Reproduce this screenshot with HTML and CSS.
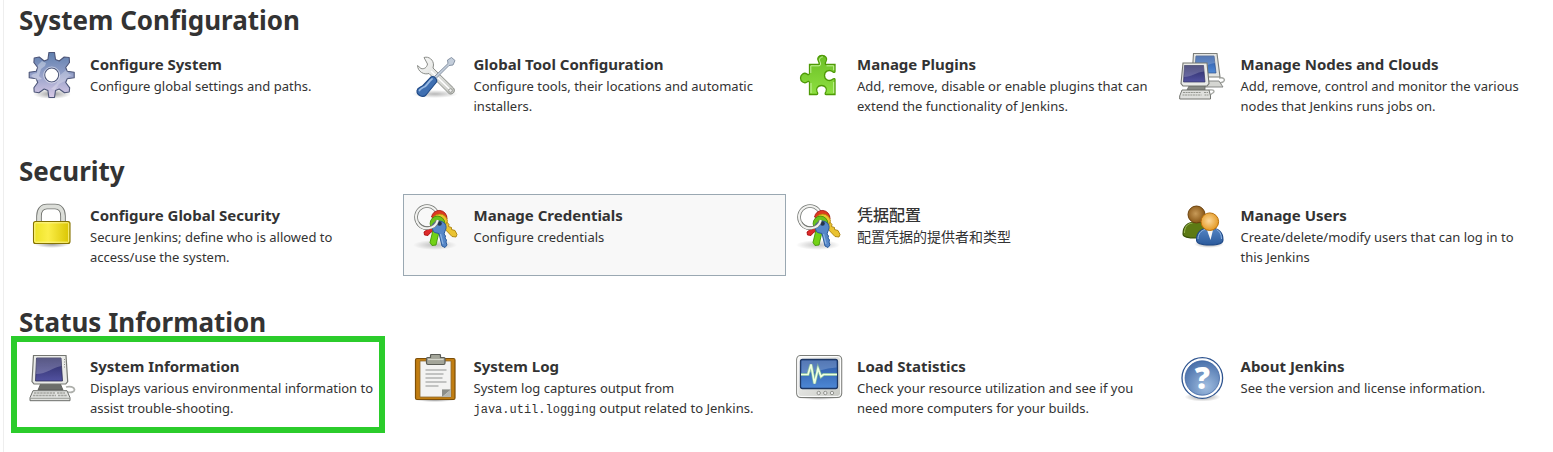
FILE: index.html
```html
<!DOCTYPE html>
<html lang="en">
<head>
    <meta charset="UTF-8">
    <meta name="viewport" content="width=device-width, initial-scale=1.0">
    <title>Manage Jenkins</title>
    <link rel="stylesheet" href="styles.css">
</head>
<body>
    <!-- shared gradients and icons used more than once -->
    <svg class="defs" width="0" height="0" aria-hidden="true">
        <defs>
            <linearGradient id="gearFill" x1="0" y1="0" x2="0" y2="1">
                <stop offset="0" stop-color="#5f7fae"/>
                <stop offset=".45" stop-color="#8f9dc6"/>
                <stop offset="1" stop-color="#d8c9e6"/>
            </linearGradient>
            <linearGradient id="metal" x1="0" y1="0" x2="1" y2="1">
                <stop offset="0" stop-color="#fafafa"/>
                <stop offset="1" stop-color="#c6c8c2"/>
            </linearGradient>
            <linearGradient id="green" x1="0" y1="0" x2="0" y2="1">
                <stop offset="0" stop-color="#6cbf26"/>
                <stop offset="1" stop-color="#8ee040"/>
            </linearGradient>
            <linearGradient id="screenDark" x1="0" y1="0" x2="0" y2="1">
                <stop offset="0" stop-color="#2a2a63"/>
                <stop offset="1" stop-color="#5252a0"/>
            </linearGradient>
            <linearGradient id="screenBlue" x1="0" y1="0" x2="0" y2="1">
                <stop offset="0" stop-color="#2a55a0"/>
                <stop offset="1" stop-color="#4d88d6"/>
            </linearGradient>
            <linearGradient id="yellow" x1="0" y1="0" x2="1" y2="0">
                <stop offset="0" stop-color="#ece224"/>
                <stop offset=".4" stop-color="#fbee48"/>
                <stop offset="1" stop-color="#d9c400"/>
            </linearGradient>
            <linearGradient id="shirtBlue" x1="0" y1="0" x2="0" y2="1">
                <stop offset="0" stop-color="#5585c4"/>
                <stop offset="1" stop-color="#2b5a9c"/>
            </linearGradient>
            <radialGradient id="brownHead" cx=".45" cy=".45" r=".6">
                <stop offset="0" stop-color="#c79a58"/>
                <stop offset="1" stop-color="#83500f"/>
            </radialGradient>
            <radialGradient id="orangeHead" cx=".45" cy=".45" r=".6">
                <stop offset="0" stop-color="#fbd89a"/>
                <stop offset="1" stop-color="#e2941a"/>
            </radialGradient>
            <radialGradient id="helpFill" cx=".6" cy=".75" r=".75">
                <stop offset="0" stop-color="#a0bde0"/>
                <stop offset="1" stop-color="#4a71ab"/>
            </radialGradient>
            <radialGradient id="shadow">
                <stop offset="0" stop-color="#000" stop-opacity=".4"/>
                <stop offset="1" stop-color="#000" stop-opacity="0"/>
            </radialGradient>
        </defs>
        <symbol id="keys" viewBox="0 0 48 48">
            <ellipse cx="23" cy="42" rx="22" ry="5" fill="url(#shadow)" opacity=".6"/>
            <circle cx="15" cy="14" r="11" fill="none" stroke="#777a76" stroke-width="3.600"/>
            <circle cx="15" cy="14" r="11" fill="none" stroke="#f2f2f0" stroke-width="2"/>
            <path d="M20 23l-8 6 .5 3 3.500 .5 2-2.500 6-4z" fill="#dd2a2a" stroke="#a40000" stroke-width=".8"/>
            <path d="M19.500 14a7.800 7.800 0 0 1 15.500 1.500l-4 6z" fill="#dd3a20" stroke="#a01010" stroke-width=".8"/>
            <path d="M29 22l5-4 3 3.500-.5 2 3 1v2l3.500 1 2 4-1 2.500-4-.5z" fill="#eac332" stroke="#a9800a" stroke-width=".9"/>
            <path d="M20 18a7.800 7.800 0 0 1 15.500 0l-3 6-6-2z" fill="#ecc22e" stroke="#ad8508" stroke-width=".8"/>
            <path d="M21 27l-3 12.500 2 3 4-.5 3-13z" fill="#73d216" stroke="#439608" stroke-width=".9"/>
            <circle cx="25.500" cy="20.500" r="7.400" fill="#6cc21c" stroke="#3f8a08" stroke-width=".8"/>
            <path d="M22.500 29.500c-4-4-3-11 4-11.500 6-.3 9.500 5 6.500 10l-1 3 1.500 2-.5 2 1.500 2-.5 2 1 3-2 2.500-3-1.500-3-12.500z" fill="#5687c8" stroke="#2b5b9b"/>
            <path d="M28.500 31l2.500 10" stroke="#8db4e2" stroke-width="1.200"/>
            <circle cx="27.500" cy="20.500" r="2.300" fill="#24344c"/>
            <path d="M25.500 17.500A11 11 0 0 1 5.500 19.500" fill="none" stroke="#777a76" stroke-width="3.600"/>
            <path d="M25.800 17A11 11 0 0 1 5.200 19" fill="none" stroke="#f2f2f0" stroke-width="2"/>
        </symbol>
    </svg>

    <main class="main-panel">
        <section class="manage-section">
            <h2 class="section-title">System Configuration</h2>
            <div class="section-list">
                <a class="section-item" href="#">
                    <svg class="icon" viewBox="0 0 48 48" aria-hidden="true">
                        <ellipse cx="24" cy="42" rx="19" ry="5" fill="url(#shadow)"/>
                        <path transform="translate(23.700 23)" fill-rule="evenodd" d="M-3.800-15.500L-2.800-22.500H2.800L3.800-15.500 7.500-14 12.500-18 17.500-17.500 17.800-12.500 14-7.500 15.500-3.800 22.500-2.800V2.800L15.500 3.800 14 7.500 18 12.800 17.500 17 12.800 17.800 7.500 14 3.800 15.500 2.800 22.500H-2.800L-3.800 15.500-7.500 14-12.800 17.800-17.500 17-17.800 12.800-14 7.500-15.500 3.800-22.500 2.800V-2.800L-15.500-3.800-14-7.500-17.800-12.500-17.500-17-12.500-18-7.500-14zM7 0A7 7 0 1 0-7 0 7 7 0 1 0 7 0z" fill="url(#gearFill)" stroke="#4c5578" stroke-width="1.100" stroke-linejoin="round"/>
                        <path d="M10 13l4-4 4 2-1 3-4 3-2 7 3 3-5 1-6-4 2-2 4-1z" fill="#fff" opacity=".35"/>
                        <path d="M31 24l7-6 3 4 3 1-4 2-3 4-6 3-4 6-4-1 6-6z" fill="#fff" opacity=".25"/>
                        <circle cx="23.700" cy="23" r="8" fill="none" stroke="#fff" stroke-opacity=".5"/>
                    </svg>
                    <div class="item-text">
                        <div class="item-title">Configure System</div>
                        <div class="item-desc">Configure global settings and paths.</div>
                    </div>
                </a>
                <a class="section-item" href="#">
                    <svg class="icon" viewBox="0 0 48 48" aria-hidden="true">
                        <ellipse cx="23" cy="42" rx="23" ry="4" fill="url(#shadow)" opacity=".7"/>
                        <path d="M12 5.500c5-1.500 9.500 2.500 9.500 7.500l-.5 3 20.500 20c2 2.500.5 6.500-4 6L17 21.500c-5 1.500-11-1.500-11.500-8l3.500 3c3 1 6-1 6.500-4.500z" fill="url(#metal)" stroke="#8b8d89" stroke-linejoin="round"/>
                        <path d="M19 19l19 18.500" stroke="#fff" stroke-width="1.500"/>
                        <circle cx="38.500" cy="38.500" r="1.800" fill="#eee" stroke="#888a85" stroke-width=".8"/>
                        <path d="M22.500 24.500L36 11.500l-.5-3.500 4-2.500 3.500 3-2 4.500-4 .5-13.500 13.500z" fill="#c4cedb" stroke="#7d8a9c" stroke-width=".9"/>
                        <path d="M19 25c2.500-1.500 6.500 1.500 5.500 5L14 43c-3 3-9.500.5-9-4.500.5-3 3-3 6-5z" fill="#3f6fb1" stroke="#204a87" stroke-width="1.100"/>
                        <path d="M20 27c-3 2-4 5-7 7.500-2 1-5 2.500-5.500 4" fill="none" stroke="#98b9e2" stroke-width="1.800" stroke-linecap="round"/>
                    </svg>
                    <div class="item-text">
                        <div class="item-title">Global Tool Configuration</div>
                        <div class="item-desc">Configure tools, their locations and automatic installers.</div>
                    </div>
                </a>
                <a class="section-item" href="#">
                    <svg class="icon" viewBox="0 0 48 48" aria-hidden="true">
                        <path d="M14.500 12.500H23c1.500 0 1.500-1.500.5-3-2-3 0-6 3.500-6s6 3 4 6c-1 1.500-1 3 .5 3H40v7c0 1-1 1.200-2 .5-3.500-3-8.500-1-8.500 3.500s5 6.500 8.500 3.500c1-.7 2-.5 2 .5v15h-9c-1.200 0-1-1.500 0-3 1.500-3-1-6-4.500-6s-6 3-4.500 6c1 1.500 1 3-.3 3h-7.200V31c0-2-1.500-2-2.500-1-3 2-6.500-.5-6.500-4s3.500-6 6.500-4c1 1 2.500 1 2.500-1z" fill="url(#green)" stroke="#4e9a06" stroke-width="1.300"/>
                        <path d="M15.800 21v-7.200H24c2 0 2-2.500.8-4.600-1-2.500 1-4.300 3-4.300M16 41V31M31.500 13.800h7.200v4.400M38.700 30v11" fill="none" stroke="#c5f29a" stroke-width="1"/>
                    </svg>
                    <div class="item-text">
                        <div class="item-title">Manage Plugins</div>
                        <div class="item-desc">Add, remove, disable or enable plugins that can extend the functionality of Jenkins.</div>
                    </div>
                </a>
                <a class="section-item" href="#">
                    <svg class="icon" viewBox="0 0 48 48" aria-hidden="true">
                        <path d="M40 26c5-1 7 2 4 4-3 1.500-7 1-9 4" fill="none" stroke="#a6a8a4" stroke-width="1.500"/>
                        <path d="M26 29h14l4 6H26z" fill="#d5d6d2" stroke="#7c7e7a" stroke-width=".9"/>
                        <path d="M14.500 1.500h23.500l3 23.500H13z" fill="#e3e4e1" stroke="#7c7e7a" stroke-width="1.100"/>
                        <path d="M17 4h18l2 17H16z" fill="url(#screenBlue)" stroke="#305088" stroke-width=".7"/>
                        <path d="M17 4h18l1 7c-7 1-13 6-19.500 6z" fill="#fff" opacity=".2"/>
                        <path d="M30 38c6-1 6 2 3 3.500-2 1-2 3-4 4" fill="none" stroke="#a6a8a4" stroke-width="1.300"/>
                        <path d="M10 34h16v4H8z" fill="#888a85" stroke="#666864" stroke-width=".8"/>
                        <path d="M4 11h24l2 20.500-2 2.500H4l-2-2.500z" fill="#e9eae7" stroke="#747671" stroke-width="1.100"/>
                        <path d="M5.500 13.500h19l1.500 16.500H4.500z" fill="url(#screenDark)" stroke="#33335f" stroke-width=".7"/>
                        <path d="M5.500 13.500h19l.5 6C18 20 12 25 5 25z" fill="#fff" opacity=".2"/>
                        <path d="M3 38h27l1.500 6v3H.7v-3z" fill="#dfe0dd" stroke="#747671" stroke-width="1"/>
                        <path d="M4 40.500h18M3.500 43h19M25 40.500h4M25.500 43h4" stroke="#94968f" stroke-width="1.200" stroke-dasharray="2 .6"/>
                    </svg>
                    <div class="item-text">
                        <div class="item-title">Manage Nodes and Clouds</div>
                        <div class="item-desc">Add, remove, control and monitor the various nodes that Jenkins runs jobs on.</div>
                    </div>
                </a>
            </div>
        </section>

        <section class="manage-section">
            <h2 class="section-title">Security</h2>
            <div class="section-list">
                <a class="section-item" href="#">
                    <svg class="icon" viewBox="0 0 48 48" aria-hidden="true">
                        <ellipse cx="24" cy="41" rx="18" ry="4" fill="url(#shadow)"/>
                        <path d="M11 20V13C11 7 14 3.500 19 3.500h8c5 0 8 3.500 8 9.500v7" fill="none" stroke="#70726e" stroke-width="5.600"/>
                        <path d="M11 20V13C11 7 14 3.500 19 3.500h8c5 0 8 3.500 8 9.500v7" fill="none" stroke="#dcded9" stroke-width="3.800"/>
                        <rect x="5.500" y="18.500" width="36.500" height="22" rx="2" fill="url(#yellow)" stroke="#857200" stroke-width="1.100"/>
                        <rect x="6.800" y="19.800" width="33.900" height="19.400" rx="1" fill="none" stroke="#fff79a" stroke-width=".9"/>
                    </svg>
                    <div class="item-text">
                        <div class="item-title">Configure Global Security</div>
                        <div class="item-desc">Secure Jenkins; define who is allowed to access/use the system.</div>
                    </div>
                </a>
                <a class="section-item active" href="#">
                    <svg class="icon" aria-hidden="true"><use href="#keys"/></svg>
                    <div class="item-text">
                        <div class="item-title">Manage Credentials</div>
                        <div class="item-desc">Configure credentials</div>
                    </div>
                </a>
                <a class="section-item" href="#" lang="zh-CN">
                    <svg class="icon" aria-hidden="true"><use href="#keys"/></svg>
                    <div class="item-text">
                        <div class="item-title">凭据配置</div>
                        <div class="item-desc">配置凭据的提供者和类型</div>
                    </div>
                </a>
                <a class="section-item" href="#">
                    <svg class="icon" viewBox="0 0 48 48" aria-hidden="true">
                        <ellipse cx="30" cy="41" rx="15" ry="4" fill="url(#shadow)"/>
                        <path d="M4 31c0-7 4-12 13-12s13 5 13 12c0 3-5 4-13 4S4 34 4 31z" fill="#5d7a14" stroke="#3a5208" stroke-width="1.100"/>
                        <path d="M5.500 30c0-6 3-9.500 8-10" fill="none" stroke="#9cb853" stroke-width="1"/>
                        <circle cx="17.500" cy="11.500" r="8.500" fill="url(#brownHead)" stroke="#6b420d" stroke-width="1"/>
                        <path d="M17.500 37c0-7 4-12 13.500-12s13 5 13 12c0 3.500-5 5-13 5s-13.500-1.500-13.500-5z" fill="url(#shirtBlue)" stroke="#204a87" stroke-width="1.100"/>
                        <path d="M19 36c0-5 3-8.500 7-9.500M42.500 36c0-5-2-8-5-9.500" fill="none" stroke="#8fb4e3" stroke-width="1"/>
                        <path d="M28 27h6l-2.500 10z" fill="#f7f7f7"/>
                        <circle cx="30.800" cy="18.700" r="8.800" fill="url(#orangeHead)" stroke="#b9700a" stroke-width="1"/>
                    </svg>
                    <div class="item-text">
                        <div class="item-title">Manage Users</div>
                        <div class="item-desc">Create/delete/modify users that can log in to this Jenkins</div>
                    </div>
                </a>
            </div>
        </section>

        <section class="manage-section">
            <h2 class="section-title">Status Information</h2>
            <div class="section-list">
                <a class="section-item highlighted" href="#">
                    <svg class="icon" viewBox="0 0 48 48" aria-hidden="true">
                        <path d="M38 33c4-1 8 0 8.500 2.500.3 2-3 3.500-6.500 2.500" fill="none" stroke="#aeb0ac" stroke-width="1.800"/>
                        <path d="M13 29h19l3 7H10z" fill="#6c6e6a" stroke="#555753" stroke-width=".8"/>
                        <path d="M5.500 1.500h32.500l1.700 26-2 2.500H6l-2-2.500z" fill="#e9eae7" stroke="#747671" stroke-width="1.200"/>
                        <path d="M8.500 4H33l1.500 23H7.500z" fill="url(#screenDark)" stroke="#2d2d58" stroke-width=".8"/>
                        <path d="M8.500 4H33l.5 8C25 13 19 20 8 20z" fill="#fff" opacity=".22"/>
                        <path d="M36.500 5v10" stroke="#8b8d88" stroke-dasharray="1 1.500"/>
                        <path d="M5 36.700h34l3 7v3H2v-3z" fill="#e1e2df" stroke="#6c6e6a" stroke-width="1"/>
                        <path d="M6 39h21M5 41.500h23M29 39h8M30 41.500h9" stroke="#a2a49f" stroke-width="1.300" stroke-dasharray="2.500 .6"/>
                        <path d="M2.500 44.300h39" stroke="#888a85" stroke-width=".8"/>
                    </svg>
                    <div class="item-text">
                        <div class="item-title">System Information</div>
                        <div class="item-desc">Displays various environmental information to assist trouble-shooting.</div>
                    </div>
                </a>
                <a class="section-item" href="#">
                    <svg class="icon" viewBox="0 0 48 48" aria-hidden="true">
                        <ellipse cx="23" cy="46" rx="20" ry="2" fill="url(#shadow)"/>
                        <rect x="3.500" y="4.500" width="39.500" height="41" rx="1.500" fill="#c17d11" stroke="#7d4f08" stroke-width="1.200"/>
                        <path d="M8 7h31v36H8z" fill="#f3f3f2" stroke="#8d6a30" stroke-width=".8"/>
                        <path d="M39 35.500h-9V43z" fill="#c4c6c1"/>
                        <path d="M30 43v-7.500h9z" fill="#8c8e8a"/>
                        <path d="M39 35.500V43h-9z" fill="#b5b7b2"/>
                        <path d="M13.500 16h21M13.500 20h18M13.500 24h17M13.500 28h21M13.500 32h13" stroke="#b3b4b2" stroke-width="1.500"/>
                        <path d="M14.500 4.500q0-1 1-1h3V1.500q0-1 1-1h8q1 0 1 1v2h3.500q1 0 1 1V9q0 1.500-1.500 1.500H16Q14.500 10.500 14.500 9z" fill="#a3a599" stroke="#5b5d57" stroke-width="1.200"/>
                        <path d="M16 5.500h15.500" stroke="#d4d6cc" stroke-width="1.200"/>
                    </svg>
                    <div class="item-text">
                        <div class="item-title">System Log</div>
                        <div class="item-desc">System log captures output from <code>java.util.logging</code> output related to Jenkins.</div>
                    </div>
                </a>
                <a class="section-item" href="#">
                    <svg class="icon" viewBox="0 0 48 48" aria-hidden="true">
                        <ellipse cx="24" cy="43.500" rx="22" ry="2.500" fill="url(#shadow)"/>
                        <rect x="1.700" y="1.500" width="45" height="42" rx="4" fill="url(#metal)" stroke="#7c7e7a" stroke-width="1.100"/>
                        <rect x="2.800" y="2.600" width="42.800" height="39.800" rx="3" fill="none" stroke="#fff"/>
                        <rect x="5.500" y="5.500" width="37" height="29" rx="2" fill="url(#screenBlue)" stroke="#1f3864" stroke-width="1.300"/>
                        <path d="M6.500 6.500h35v7C30 14 20 19 6.500 19z" fill="#fff" opacity=".2"/>
                        <path d="M6 20.500h7l3-10 3.500 19 3.500-15 3 8 2.500-2H42" fill="none" stroke="#9fdc8c" stroke-opacity=".6" stroke-width="3.200"/>
                        <path d="M6 20.500h7l3-10 3.500 19 3.500-15 3 8 2.500-2H42" fill="none" stroke="#efffdf" stroke-width="1.700"/>
                        <g fill="#eee" stroke="#92948f">
                            <circle cx="23.700" cy="39" r="1.700"/>
                            <circle cx="30.300" cy="39" r="1.700"/>
                            <circle cx="37" cy="39" r="1.700"/>
                        </g>
                    </svg>
                    <div class="item-text">
                        <div class="item-title">Load Statistics</div>
                        <div class="item-desc">Check your resource utilization and see if you need more computers for your builds.</div>
                    </div>
                </a>
                <a class="section-item" href="#">
                    <svg class="icon" viewBox="0 0 48 48" aria-hidden="true">
                        <ellipse cx="23.500" cy="43" rx="18" ry="4.500" fill="url(#shadow)"/>
                        <circle cx="23.300" cy="24" r="20.300" fill="#fff" stroke="#2f5590" stroke-width="1.300"/>
                        <circle cx="23.300" cy="24" r="17.200" fill="url(#helpFill)" stroke="#3f66a3" stroke-width=".8"/>
                        <text class="help-mark" x="23.300" y="34.500" text-anchor="middle">?</text>
                    </svg>
                    <div class="item-text">
                        <div class="item-title">About Jenkins</div>
                        <div class="item-desc">See the version and license information.</div>
                    </div>
                </a>
            </div>
        </section>
    </main>
</body>
</html>
```
FILE: styles.css
```css
* {
    box-sizing: border-box;
}
body {
    margin: 0;
    background-color: #fff;
    color: #333;
    font-family: "Segoe UI", "Noto Sans", "Noto Sans CJK SC", sans-serif;
    font-size: 13px;
    line-height: 20px;
}
.defs {
    position: absolute;
}
.main-panel {
    min-height: 100vh;
    margin-left: 3px;
    padding-left: 15px;
    border-left: 1px solid #eee;
}
.manage-section {
    padding-bottom: 26px;
}
.manage-section:last-child {
    padding-bottom: 0;
}
.section-title {
    margin: 0 0 3px;
    font-size: 26px;
    line-height: 40px;
    font-weight: bold;
}
.section-list {
    display: grid;
    grid-template-columns: repeat(4, 1fr);
}
.section-item {
    position: relative;
    display: flex;
    gap: 14px;
    min-height: 82px;
    padding: 8px 16px 8px 8px;
    border: 1px solid transparent;
    color: #333;
    text-decoration: none;
}
.section-item.active {
    background-color: #f8f8f8;
    border-color: #9aa8b2;
}
/* green frame round the marked item */
.section-item.highlighted::after {
    content: "";
    position: absolute;
    top: -10px;
    right: 17px;
    bottom: -7px;
    left: -9px;
    border: 6px solid #2bcc2b;
}
.icon {
    flex: none;
    width: 48px;
    height: 48px;
}
.item-text {
    flex: 1;
    min-width: 0;
}
.item-title {
    font-size: 15px;
    line-height: 24px;
    font-weight: bold;
}
.item-desc code {
    font-family: "Liberation Mono", monospace;
    font-size: 12px;
    line-height: 1;
}
.section-item:lang(zh) .item-title {
    font-size: 16px;
    font-weight: 500;
}
.section-item:lang(zh) .item-desc {
    font-size: 14px;
}
.help-mark {
    fill: #fff;
    font-family: "Open Sans", "Noto Sans", sans-serif;
    font-size: 30px;
    font-weight: 800;
}
```
